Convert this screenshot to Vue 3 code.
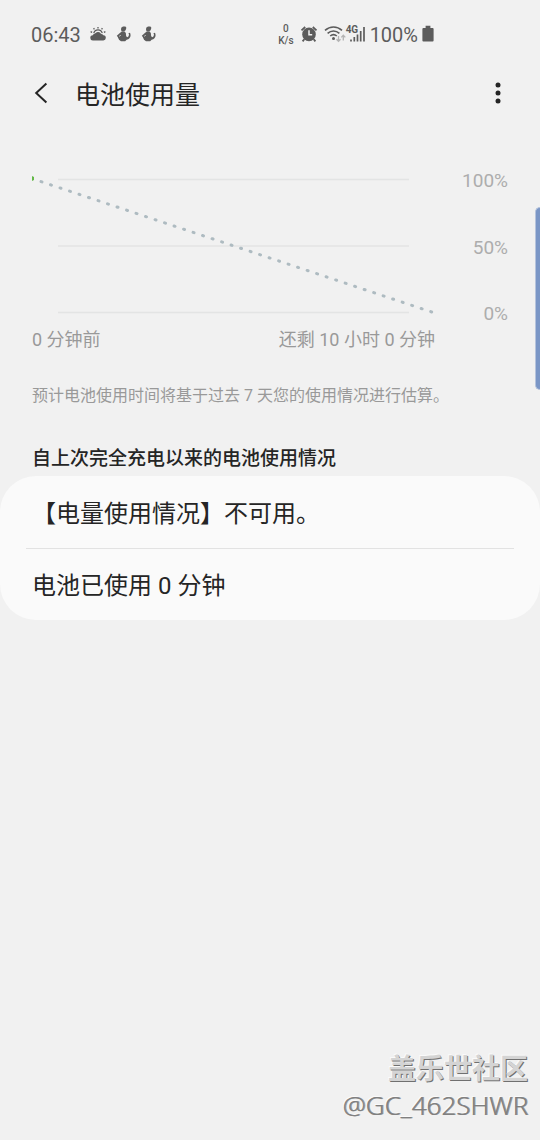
<script setup>
const levels = ['100%', '50%', '0%']
const usage = ['【电量使用情况】不可用。', '电池已使用 0 分钟']
</script>

<template>
  <div class="screen">
    <div class="status">
      <span class="clock">06:43</span>
      <svg class="weather" width="16" height="14" viewBox="0 0 16 14" aria-hidden="true">
        <g fill="none" stroke="#5c5c5c" stroke-width="1.3">
          <path d="M3.8 6.2A4.3 4.3 0 0 1 12.2 6.2" />
          <path d="M8 0v1.4M3.6 1.2l.8 1.2M12.4 1.2l-.8 1.2M.6 4.6l1.5.7M15.4 4.6l-1.5.7" />
        </g>
        <path d="M3 13.4a2.6 2.6 0 0 1-.2-5.2A3 3 0 0 1 5 6.6a3.5 3.5 0 0 1 6.1.5 3 3 0 0 1 2.3 1.1 2.6 2.6 0 0 1-.4 5.2z" fill="#5c5c5c" />
      </svg>
      <svg v-for="n in 2" :key="n" class="figure" width="15" height="16" viewBox="0 0 15 16" aria-hidden="true">
        <path d="M5.2 1.8L7 .6h2.4l1 1.2-.8 2.4L8 5.6H6.2L5 4.2z" fill="#5c5c5c" />
        <path d="M5.6 5.4h3l1.2 1.6.4 3.4v3H3.6L.8 9.8z" fill="#5c5c5c" />
        <path d="M2 11l8.4-.6 1 .8 1.2-1 .4-1.6-.6-1.4 1.6-.4c1.2 2.8.4 5-1.8 6.4l-1.6.6-1.4 1.4H5L3 13.8z" fill="#5c5c5c" />
        <path d="M4.4 9.2l-.8 1.2" fill="none" stroke="#f1f1f1" />
      </svg>
      <span class="spacer"></span>
      <span class="speed"><span>0</span><span>K/s</span></span>
      <svg class="alarm" width="18" height="18" viewBox="0 0 18 18" aria-hidden="true">
        <circle cx="9" cy="9.4" r="6.8" fill="#5c5c5c" />
        <path d="M1.5 5.4L5.2 2M16.5 5.4L12.8 2M4.3 14.2l-1.7 2.2M13.7 14.2l1.7 2.2" stroke="#5c5c5c" stroke-width="1.8" fill="none" />
        <path d="M9 5.3v4.5h3.2" stroke="#f2f2f2" stroke-width="1.5" fill="none" />
      </svg>
      <svg class="wifi" width="22" height="18" viewBox="0 0 22 18" aria-hidden="true">
        <g fill="none" stroke="#5c5c5c" stroke-width="1.6">
          <path d="M1 5.4C6 .9 13 .9 18 5.4" />
          <path d="M3.6 8.3c3.5-3.1 8.3-3.1 11.8 0" />
          <path d="M6.2 11c2-1.7 4.6-1.7 6.6 0" />
        </g>
        <circle cx="9.5" cy="13.6" r="1.5" fill="#5c5c5c" />
        <g fill="none" stroke="#b4b4b4" stroke-width="1.3">
          <path d="M14.5 11v5M12.5 14.2l2 2.1 2-2.1" />
          <path d="M19.3 15.6v-5M17.3 12.4l2-2.1 2 2.1" />
        </g>
      </svg>
      <span class="signal">
        <svg width="19" height="18" viewBox="0 0 19 18" aria-hidden="true">
          <path d="M5 16.5v-2M8.3 16.5V12M11.5 16.5V9.5M14.7 16.5V6M18 16.5V2" stroke="#5c5c5c" stroke-width="1.7" fill="none" />
        </svg>
        <span class="network">4G</span>
      </span>
      <span class="percent">100%</span>
      <svg class="battery" width="12" height="18" viewBox="0 0 12 18" aria-hidden="true">
        <path d="M3.6.8h4.8V3h2.2q1 0 1 1v11.6q0 1-1 1H1.4q-1 0-1-1V4q0-1 1-1h2.2z" fill="#5c5c5c" />
      </svg>
    </div>

    <header class="bar">
      <button class="icon-button" type="button" aria-label="返回">
        <svg width="16" height="24" viewBox="0 0 16 24" aria-hidden="true">
          <path d="M14.4 2.4L4.2 12l10.2 9.6" fill="none" stroke="#252525" stroke-width="2" />
        </svg>
      </button>
      <h1>电池使用量</h1>
      <button class="icon-button more" type="button" aria-label="更多选项">
        <svg width="6" height="24" viewBox="0 0 6 24" fill="#252525" aria-hidden="true">
          <circle cx="3" cy="4" r="2.5" />
          <circle cx="3" cy="12" r="2.5" />
          <circle cx="3" cy="20" r="2.5" />
        </svg>
      </button>
    </header>

    <main>
      <section class="chart">
        <div class="plot">
          <svg viewBox="0 0 403 140" aria-hidden="true">
            <path d="M26 4.5h351M26 71h351M26 137.5h351" stroke="#e3e4e4" stroke-width="1.4" />
            <path d="M9 6.6L400 137.1" stroke="#aebbc1" stroke-width="3" stroke-linecap="round" stroke-dasharray="1 9.02" />
            <path d="M0 1l2 1v3l-2 1z" fill="#63b847" />
          </svg>
          <div class="times"><span>0 分钟前</span><span>还剩 10 小时 0 分钟</span></div>
        </div>
        <div class="levels">
          <span v-for="level in levels" :key="level">{{ level }}</span>
        </div>
      </section>
      <p class="note">预计电池使用时间将基于过去 7 天您的使用情况进行估算。</p>
      <h2>自上次完全充电以来的电池使用情况</h2>
      <ul class="card">
        <li v-for="item in usage" :key="item">{{ item }}</li>
      </ul>
    </main>

    <div class="edge"></div>
    <footer class="watermark">
      <strong>盖乐世社区</strong>
      <span>@GC_462SHWR</span>
    </footer>
  </div>
</template>

<style>
body {
  margin: 0;
  background: #f1f1f1;
}
</style>

<style scoped>
.screen {
  position: relative;
  display: flex;
  flex-direction: column;
  min-height: 100vh;
  box-sizing: border-box;
  background: #f1f1f1;
  color: #252525;
  font-family: Roboto, "Noto Sans CJK SC", sans-serif;
}
.status {
  display: flex;
  align-items: center;
  height: 36px;
  padding: 16px 106px 0 31px;
  color: #5c5c5c;
  font-size: 20px;
  line-height: 24px;
}
.clock,
.percent {
  padding-top: 2px;
}
.weather {
  margin-left: 9px;
}
.figure {
  margin-left: 10px;
}
.spacer {
  flex: 1;
}
.speed {
  display: flex;
  flex-direction: column;
  align-items: center;
  padding-top: 1px;
  font-size: 10px;
  line-height: 12px;
  font-weight: 500;
}
.alarm {
  margin-left: 6px;
}
.wifi {
  margin-left: 6px;
}
.signal {
  position: relative;
  display: flex;
}
.network {
  position: absolute;
  left: 0;
  top: 0;
  font-size: 10px;
  line-height: 10px;
  font-weight: 700;
}
.percent {
  margin-left: 5px;
}
.battery {
  margin-left: 4px;
}
.bar {
  display: flex;
  align-items: center;
  height: 82px;
  padding: 0 32px;
}
.icon-button {
  display: flex;
  padding: 0;
  border: 0;
  background: none;
}
.more {
  margin-left: auto;
  padding-right: 7px;
}
h1 {
  margin: 0 0 0 27px;
  padding-top: 5px;
  font-size: 25px;
  line-height: 36px;
  font-weight: 400;
}
.chart {
  display: flex;
  justify-content: space-between;
  padding: 41px 32px 0;
}
.plot {
  flex: 0 1 403px;
}
.plot svg {
  display: block;
  width: 100%;
}
.times {
  display: flex;
  justify-content: space-between;
  margin-top: 11px;
  color: #999;
  font-size: 18px;
  line-height: 28px;
}
.levels {
  display: flex;
  flex-direction: column;
  justify-content: space-between;
  height: 157px;
  margin-top: -6px;
  color: #adadad;
  font-size: 19px;
  line-height: 24px;
  text-align: right;
}
.note {
  margin: 30px 32px 0;
  color: #999;
  font-size: 16px;
  line-height: 24px;
}
h2 {
  margin: 37px 32px 0;
  font-size: 19px;
  line-height: 28px;
  font-weight: 500;
}
.card {
  margin: 3px 0 0;
  padding: 0 26px;
  border-radius: 36px;
  background: #fafafa;
  list-style: none;
  font-size: 24px;
  line-height: 36px;
}
.card li {
  padding: 20px 6px 16px;
}
.card li + li {
  padding-top: 19px;
  border-top: 1px solid #e2e2e2;
}
.edge {
  position: absolute;
  right: 0;
  top: 207px;
  width: 4px;
  height: 181px;
  border: 1px solid #b5c3dc;
  border-right: 0;
  border-radius: 6px 0 0 6px;
  background: #7a96c6;
}
.watermark {
  display: flex;
  flex-direction: column;
  align-items: flex-end;
  margin-top: auto;
  padding: 0 12px 17px;
}
.watermark strong {
  padding-top: 2px;
  color: #d4d4d4;
  font-size: 28px;
  line-height: 34px;
  font-weight: 700;
  text-shadow: 1px 1px 0 #707070, -1px -1px 0 #fafafa;
}
.watermark span {
  color: #808080;
  font-family: "Noto Sans", sans-serif;
  font-size: 26px;
  font-weight: 300;
  line-height: 36px;
  text-shadow: 1px 0 0 #999, -1px -1px 0 #fafafa;
}
</style>
